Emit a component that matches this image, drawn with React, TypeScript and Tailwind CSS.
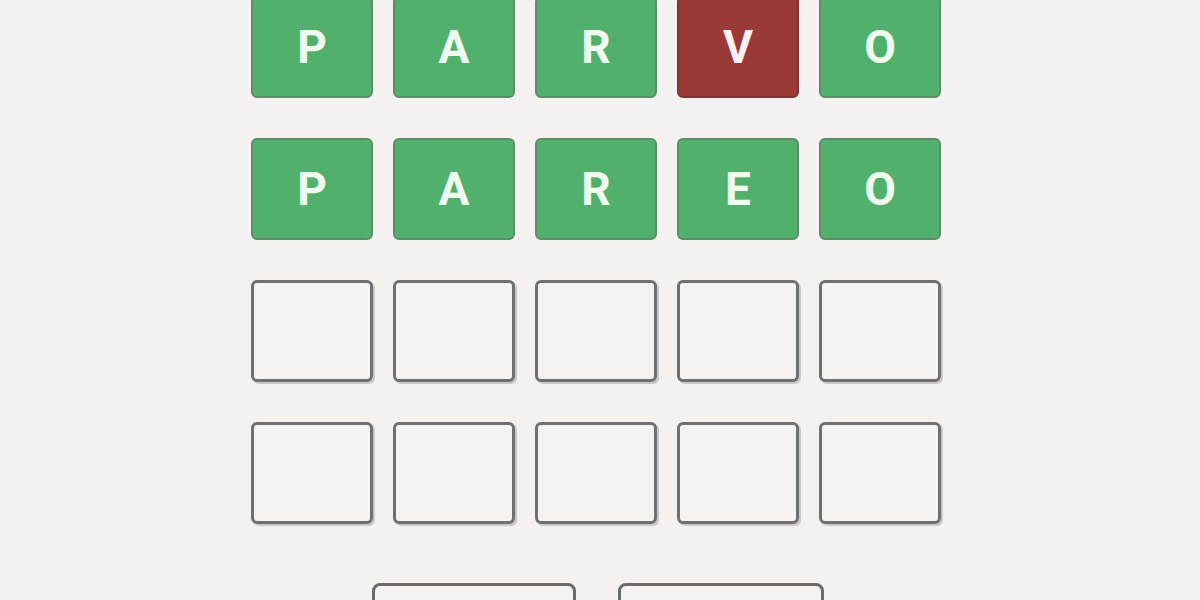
import React from 'react';

type Tile = { letter: string; state: 'correct' | 'wrong' | 'empty' };

const rows: Tile[][] = [
  [
    { letter: 'P', state: 'correct' },
    { letter: 'A', state: 'correct' },
    { letter: 'R', state: 'correct' },
    { letter: 'V', state: 'wrong' },
    { letter: 'O', state: 'correct' },
  ],
  [
    { letter: 'P', state: 'correct' },
    { letter: 'A', state: 'correct' },
    { letter: 'R', state: 'correct' },
    { letter: 'E', state: 'correct' },
    { letter: 'O', state: 'correct' },
  ],
  Array.from({ length: 5 }, () => ({ letter: '', state: 'empty' as const })),
  Array.from({ length: 5 }, () => ({ letter: '', state: 'empty' as const })),
];

const tileStyles = {
  correct: 'bg-[#52b06d] border-2 border-[#5d8c69] text-[#effbef]',
  wrong: 'bg-[#9a3a37] border-2 border-[#7a3532] text-[#fdf2f2]',
  empty: 'bg-[#f4f3f2] border-[3px] border-[#707070] shadow-[2px_2px_0_#c9c9c9]',
};

const App: React.FC = () => {
  return (
    <div className="h-[600px] w-full overflow-hidden bg-[#f3f2f1] font-['Roboto','Liberation_Sans',sans-serif]">
      <div className="mx-auto mt-[-4px] flex w-[700px] flex-col gap-[40px] pl-[1px] pr-[9px]">
        {rows.map((row, i) => (
          <div key={i} className="grid grid-cols-5 gap-[20px]">
            {row.map((tile, j) => (
              <div
                key={j}
                className={`flex h-[102px] items-center justify-center rounded-[6px] text-[46px] font-bold ${tileStyles[tile.state]}`}
              >
                {tile.letter}
              </div>
            ))}
          </div>
        ))}
        {/* Action buttons */}
        <div className="mt-[19px] flex justify-center gap-[42px] pl-[3px]">
          <button className="h-[60px] w-[204px] rounded-[8px] border-[3px] border-[#6a6a6a] bg-[#f4f3f2]" />
          <button className="h-[60px] w-[206px] rounded-[8px] border-[3px] border-[#6a6a6a] bg-[#f4f3f2]" />
        </div>
      </div>
    </div>
  );
};

export default App;
